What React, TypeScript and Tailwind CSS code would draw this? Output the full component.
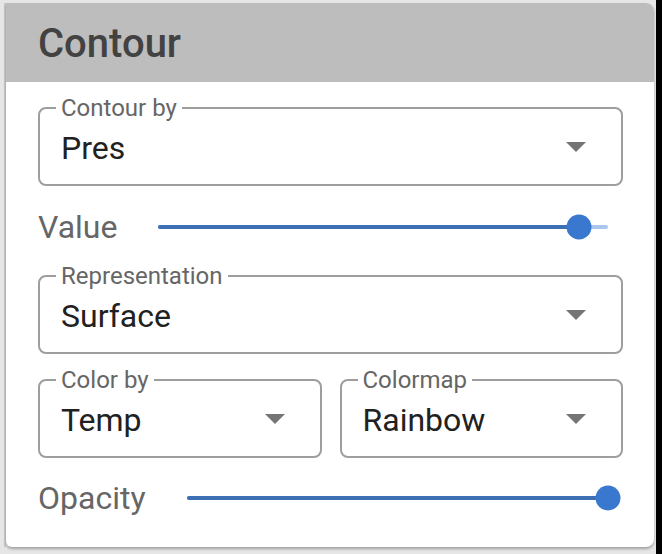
import React from 'react';

const font = "font-['Roboto','Liberation_Sans',sans-serif]";

function ArrowDown() {
  return (
    <svg width="20" height="10" viewBox="0 0 20 10" className="shrink-0">
      <path d="M0 0 L10 10 L20 0 Z" fill="#757575" />
    </svg>
  );
}

interface SelectProps {
  label: string;
  value: string;
  className?: string;
}

function OutlinedSelect({ label, value, className = '' }: SelectProps) {
  return (
    <div
      className={`relative h-[79px] border-2 border-[#9e9e9e] rounded-[8px] flex items-center pl-[21px] pr-[35px] ${className}`}
    >
      <span className="absolute left-[16px] top-[-15px] bg-white px-[5px] text-[24px] leading-[28px] text-[#666666]">
        {label}
      </span>
      <span className="flex-1 text-[32px] leading-none text-[#212121] pt-[2px]">{value}</span>
      <ArrowDown />
    </div>
  );
}

interface SliderProps {
  label: string;
  percent: number;
}

function SliderRow({ label, percent }: SliderProps) {
  return (
    <div className="flex items-center h-[40px] pr-[15px] gap-[41px]">
      <span className="text-[32px] leading-none text-[#666666]">{label}</span>
      <div className="relative flex-1 h-[4px] bg-[#a9c6ee] rounded-full">
        <div className="absolute left-0 top-0 h-[4px] bg-[#3c6fb4] rounded-full" style={{ width: `${percent}%` }} />
        <div
          className="absolute top-1/2 w-[25px] h-[25px] -translate-x-1/2 -translate-y-1/2 rounded-full bg-[#3a77cf]"
          style={{ left: `${percent}%` }}
        />
      </div>
    </div>
  );
}

export default function App() {
  return (
    <div className={`w-[662px] h-[554px] bg-[#e6e6e6] flex ${font}`}>
      <div className="w-[4px]" />
      <div className="w-[2px] mt-[3px] h-[544px] bg-[#c9c9c9]" />
      <div className="mt-[3px] w-[648px] h-[544px] bg-white rounded-r-[8px] rounded-bl-[6px] overflow-hidden shadow-[0_2px_3px_rgba(0,0,0,0.3)] flex flex-col">
        {/* Header */}
        <div className="h-[79px] bg-[#bdbdbd] flex items-center pl-[32px]">
          <h2 className="text-[40px] leading-none font-medium text-[#424242] pt-[2px]">Contour</h2>
        </div>

        {/* Body */}
        <div className="pl-[32px] pr-[31px] pt-[25px] flex flex-col">
          <OutlinedSelect label="Contour by" value="Pres" />

          <div className="mt-[21px]">
            <SliderRow label="Value" percent={93.5} />
          </div>

          <OutlinedSelect label="Representation" value="Surface" className="mt-[28px]" />

          <div className="mt-[25px] flex gap-[18px]">
            <OutlinedSelect label="Color by" value="Temp" className="flex-1" />
            <OutlinedSelect label="Colormap" value="Rainbow" className="flex-1" />
          </div>

          <div className="mt-[20px]">
            <SliderRow label="Opacity" percent={100} />
          </div>
        </div>
      </div>
      <div className="w-[2px]" />
      <div className="w-[6px] bg-black" />
    </div>
  );
}
